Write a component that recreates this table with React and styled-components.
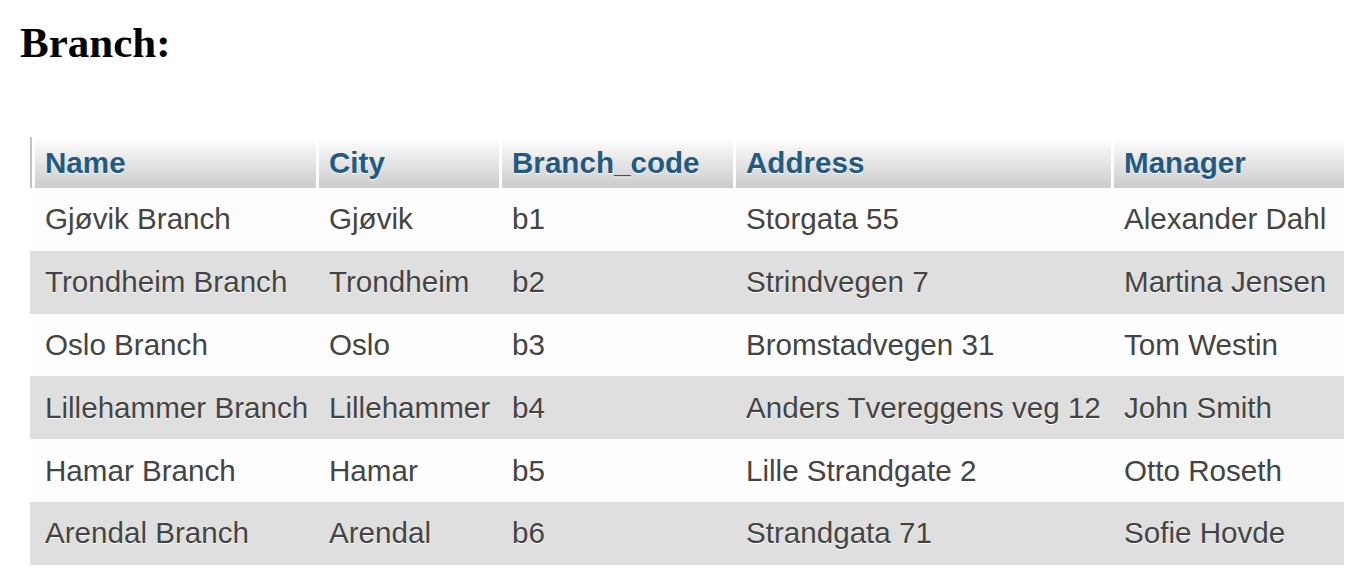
import styled, { createGlobalStyle } from 'styled-components';

const GlobalStyle = createGlobalStyle`
    html, body {
        margin: 0;
        padding: 0;
        background: #ffffff;
    }
`;

const Page = styled.div`
    padding: 21px 0 0 20px;
`;

const Title = styled.h2`
    margin: 0;
    font-family: 'Liberation Serif', 'Times New Roman', serif;
    font-size: 43px;
    font-weight: bold;
    line-height: 43px;
    color: #000;
`;

const Table = styled.table`
    margin: 73px 0 0 10px;
    width: 1314px;
    table-layout: fixed;
    border-collapse: separate;
    border-spacing: 0;
    font-family: 'Liberation Sans', Arial, sans-serif;
    font-size: 29.6px;
`;

const Th = styled.th`
    box-sizing: border-box;
    width: ${(p) => p.$w}px;
    height: 51px;
    padding: 0 0 0 10px;
    text-align: left;
    vertical-align: middle;
    font-weight: bold;
    color: #235a81;
    text-shadow: 0 1px 0 #ffffff;
    white-space: nowrap;
    background: linear-gradient(#ffffff, #cccccc);
    border-left: 3px solid #ffffff;

    &:first-child {
        padding-left: 13px;
        border-left: 2px solid #c4c4c4;
        box-shadow: inset 3px 0 0 #ffffff;
    }
`;

const Row = styled.tr`
    background: ${(p) => (p.$even ? '#dfdfdf' : '#fdfdfd')};
`;

const Td = styled.td`
    height: 62.8px;
    padding: 0 0 0 13px;
    vertical-align: middle;
    color: #444444;
    text-shadow: 0 1px 0 #ffffff;
    white-space: nowrap;
    overflow: hidden;

    &:first-child {
        padding-left: 15px;
    }
`;

const columns = [
    { key: 'name', label: 'Name', width: 286 },
    { key: 'city', label: 'City', width: 183 },
    { key: 'code', label: 'Branch_code', width: 234 },
    { key: 'address', label: 'Address', width: 378 },
    { key: 'manager', label: 'Manager', width: 233 },
];

const branches = [
    { name: 'Gjøvik Branch', city: 'Gjøvik', code: 'b1', address: 'Storgata 55', manager: 'Alexander Dahl' },
    { name: 'Trondheim Branch', city: 'Trondheim', code: 'b2', address: 'Strindvegen 7', manager: 'Martina Jensen' },
    { name: 'Oslo Branch', city: 'Oslo', code: 'b3', address: 'Bromstadvegen 31', manager: 'Tom Westin' },
    { name: 'Lillehammer Branch', city: 'Lillehammer', code: 'b4', address: 'Anders Tvereggens veg 12', manager: 'John Smith' },
    { name: 'Hamar Branch', city: 'Hamar', code: 'b5', address: 'Lille Strandgate 2', manager: 'Otto Roseth' },
    { name: 'Arendal Branch', city: 'Arendal', code: 'b6', address: 'Strandgata 71', manager: 'Sofie Hovde' },
];

const App = () => {
    return (
        <Page>
            <GlobalStyle />
            <Title>Branch:</Title>
            <Table>
                <thead>
                    <tr>
                        {columns.map((c) => (
                            <Th key={c.key} $w={c.width}>
                                {c.label}
                            </Th>
                        ))}
                    </tr>
                </thead>
                <tbody>
                    {branches.map((b, i) => (
                        <Row key={b.code} $even={i % 2 === 1}>
                            {columns.map((c) => (
                                <Td key={c.key}>{b[c.key]}</Td>
                            ))}
                        </Row>
                    ))}
                </tbody>
            </Table>
        </Page>
    );
};

export default App;
